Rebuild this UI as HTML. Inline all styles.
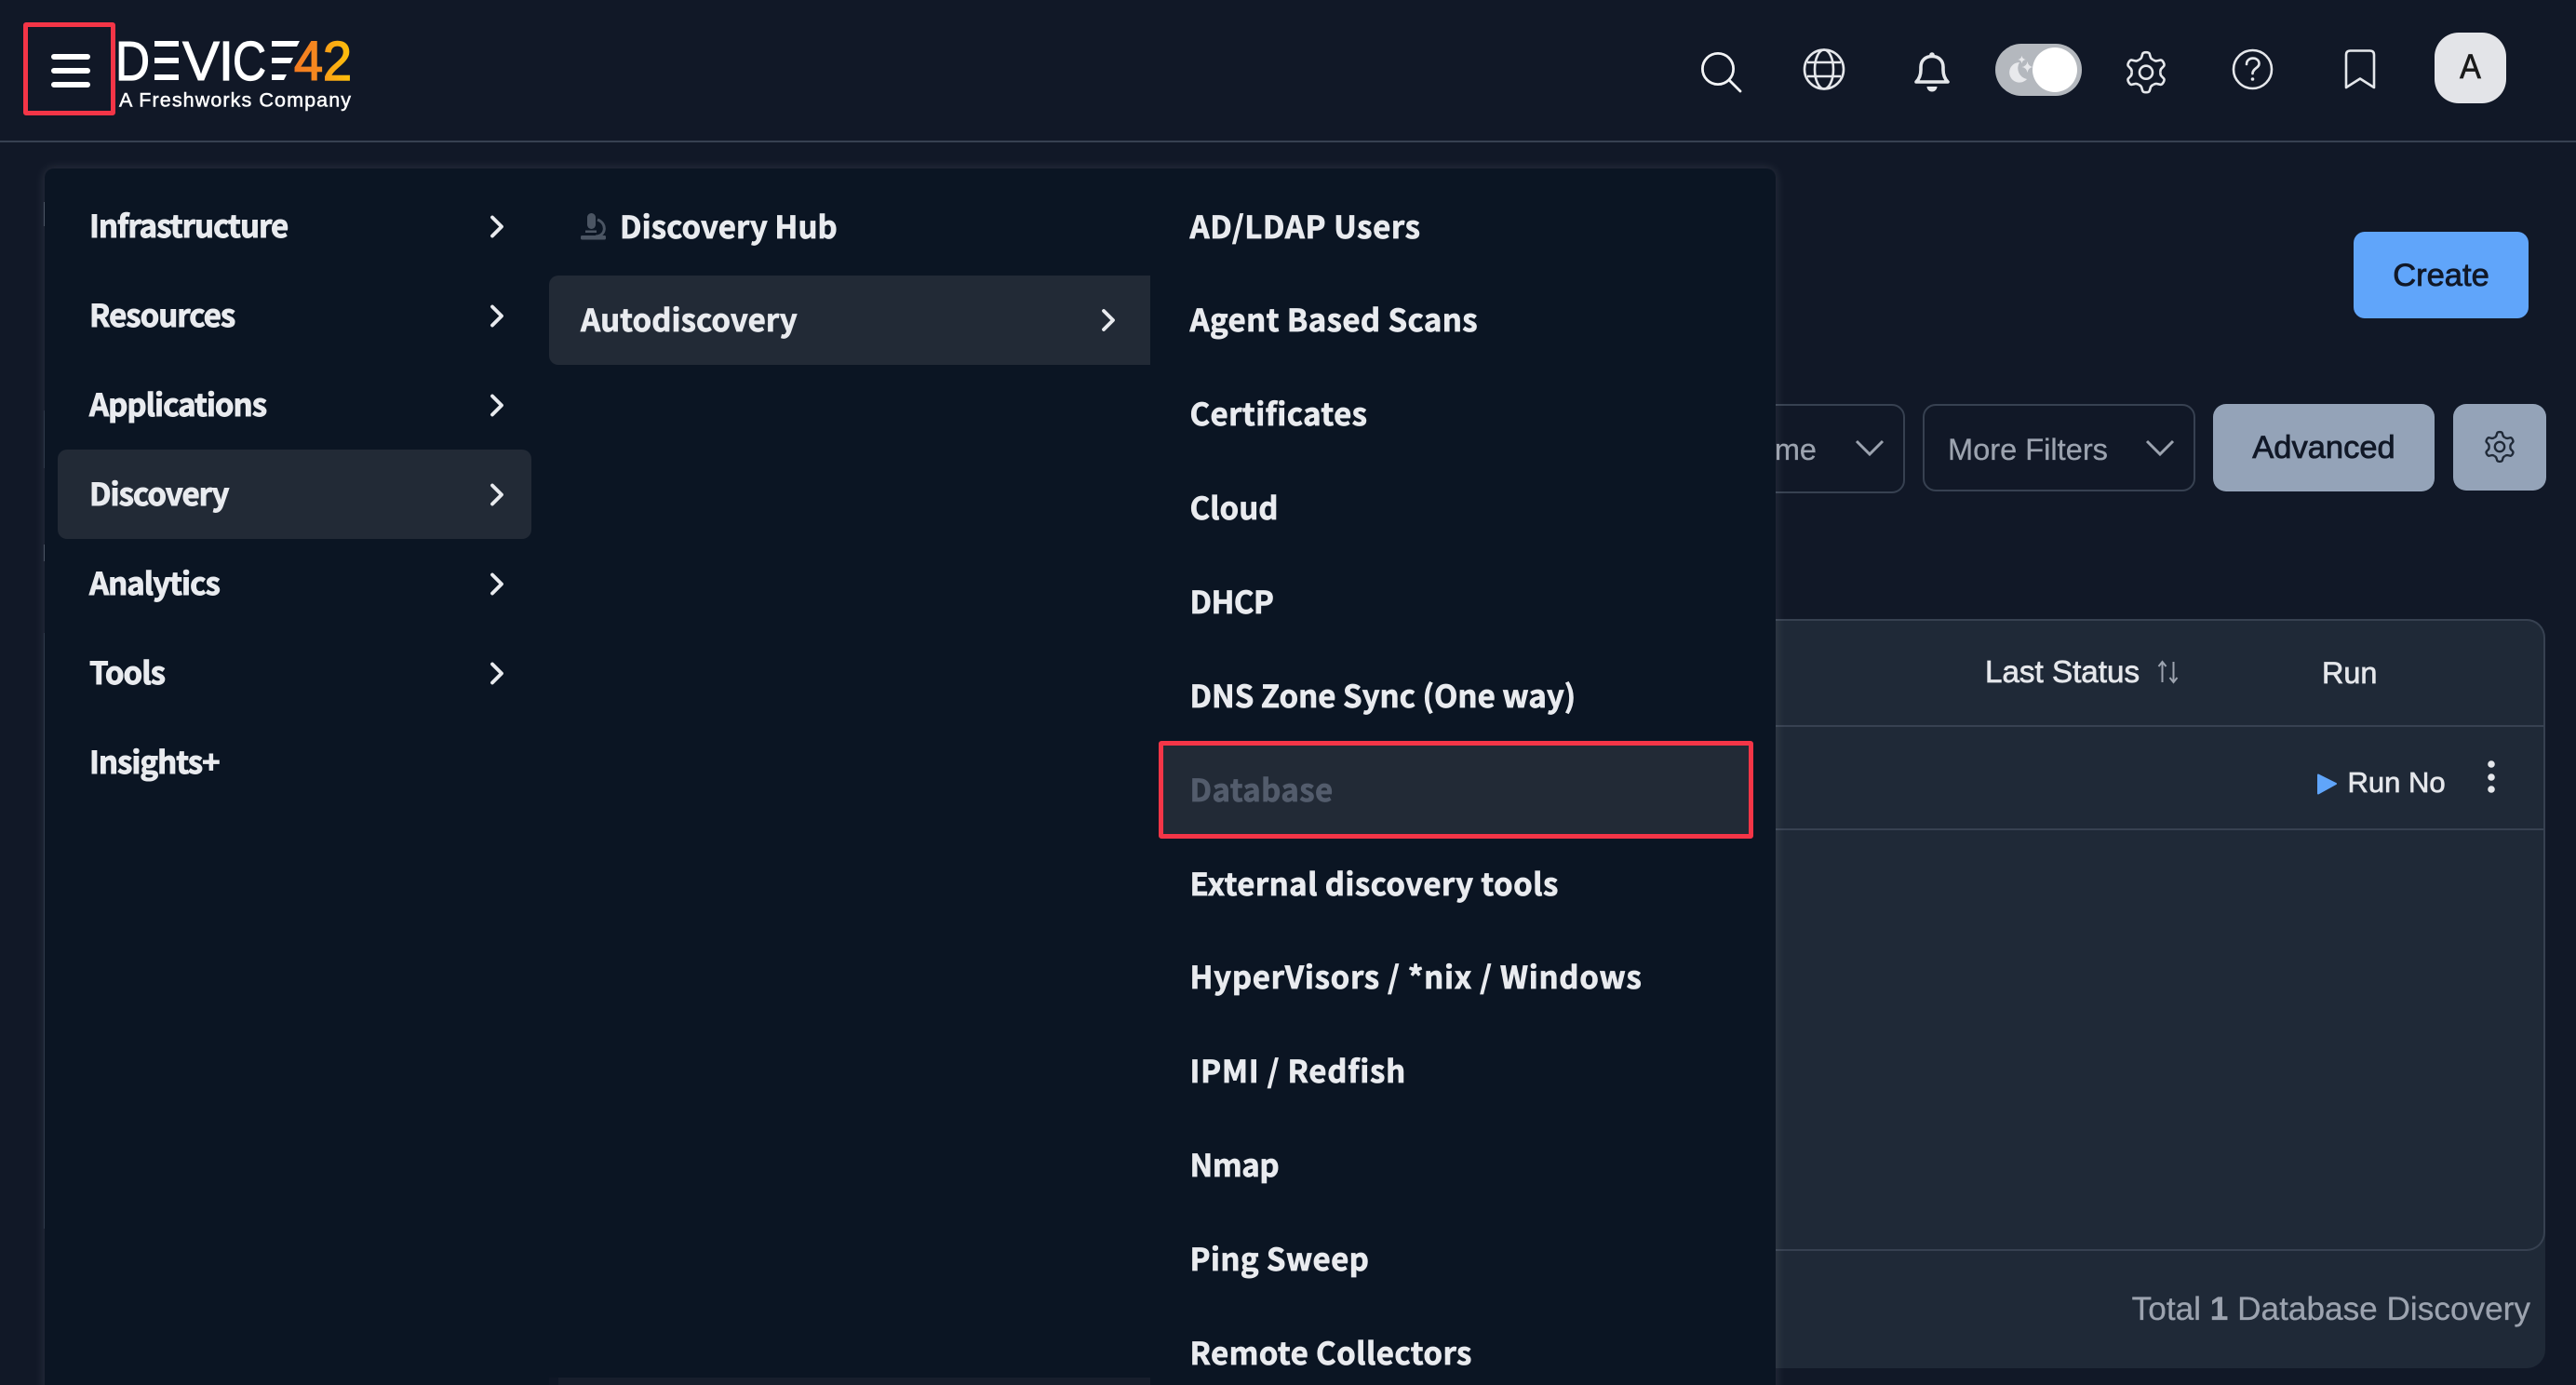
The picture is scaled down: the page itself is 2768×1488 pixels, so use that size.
<!DOCTYPE html>
<html lang="en">
<head>
<meta charset="utf-8">
<title>Device42</title>
<style>
html,body{margin:0;padding:0;width:2768px;height:1488px;overflow:hidden;background:#111827}
body{position:relative;font-family:"Liberation Sans",sans-serif}
.a{position:absolute}
.t{position:absolute;white-space:nowrap;line-height:40px;height:40px}
.u{color:#e5e7eb;-webkit-text-stroke:.7px currentColor}
.m{font-family:"Noto Sans CJK JP","Liberation Sans",sans-serif;font-weight:700;color:#e9ebef;font-size:33px;-webkit-text-stroke:.7px currentColor}
.c1{letter-spacing:-1px;left:96px;-webkit-text-stroke:.9px currentColor}
.c2{letter-spacing:.05px;left:624px}
.c3{letter-spacing:.4px;left:1278.5px}
</style>
</head>
<body>
<div class="a" style="left:0;top:151px;width:2768px;height:2px;background:#374151"></div>

<!-- page content -->
<div class="a" style="left:2529px;top:249px;width:188px;height:93px;border-radius:12px;background:#60a5fa"></div>
<div class="t" style="left:2529px;width:188px;top:276px;text-align:center;font-size:34.5px;color:#111827;-webkit-text-stroke:.8px #111827">Create</div>

<div class="a" style="left:1700px;top:434px;width:343px;height:92px;border:2px solid #374151;border-radius:14px"></div>
<div class="t" style="right:816px;top:463px;font-size:32.5px;color:#9ca3af;-webkit-text-stroke:.3px #9ca3af">Name</div>
<div class="a" style="left:2066px;top:434px;width:289px;height:90px;border:2px solid #374151;border-radius:14px"></div>
<div class="t" style="left:2093px;top:463px;font-size:32.6px;color:#9ca3af;-webkit-text-stroke:.3px #9ca3af">More Filters</div>
<div class="a" style="left:2378px;top:434px;width:238px;height:94px;border-radius:14px;background:#94a3b8"></div>
<div class="t" style="left:2378px;width:238px;top:461px;text-align:center;font-size:34.5px;color:#111827;-webkit-text-stroke:.8px #111827">Advanced</div>
<div class="a" style="left:2636px;top:434px;width:100px;height:93px;border-radius:14px;background:#94a3b8"></div>

<div class="a" style="left:1500px;top:665px;width:1235px;height:805px;background:#1f2937;border-radius:0 20px 20px 0"></div>
<div class="a" style="left:1500px;top:665px;width:1233px;height:675px;border:2px solid #374151;border-left:0;border-radius:0 20px 20px 0"></div>
<div class="a" style="left:1500px;top:779px;width:1235px;height:2px;background:#374151"></div>
<div class="a" style="left:1500px;top:890px;width:1235px;height:2px;background:#374151"></div>
<div class="t u" style="left:2133px;top:703px;font-size:33.2px">Last Status</div>
<div class="t u" style="left:2495px;top:703px;font-size:32.4px">Run</div>
<div class="t u" style="left:2522.5px;top:821px;font-size:31px">Run No</div>
<div class="t" style="right:49px;top:1387px;font-size:35.2px;color:#9ca3af;-webkit-text-stroke:.3px #9ca3af">Total <b>1</b> Database Discovery</div>

<!-- mega menu -->
<div class="a" style="left:48px;top:181px;width:1860px;height:1320px;background:#0b1523;border-radius:10px 10px 0 0;box-shadow:0 0 12px rgba(255,255,255,.13)"></div>
<div class="a" style="left:600px;top:1480px;width:636px;height:8px;background:#171e2c"></div>
<div class="a" style="left:590px;top:1480px;width:10px;height:8px;background:#0f1726"></div>
<div class="a" style="left:47px;top:217px;width:1px;height:26px;background:#4b5563"></div>
<div class="a" style="left:47px;top:441px;width:1px;height:62px;background:#2f3949"></div>
<div class="a" style="left:47px;top:585px;width:1px;height:18px;background:#4b5563"></div>
<div class="a" style="left:47px;top:680px;width:1px;height:640px;background:#2f3949"></div>

<div class="a" style="left:62px;top:483px;width:509px;height:96px;background:#222a36;border-radius:10px"></div>
<div class="a" style="left:590px;top:296px;width:646px;height:96px;background:#222a36;border-radius:10px 0 0 10px"></div>
<div class="a" style="left:1245px;top:796px;width:639px;height:105px;box-sizing:border-box;background:#222a36;border:5.5px solid #f43547;border-radius:3px"></div>

<div class="t m c1" style="top:220.5px">Infrastructure</div>
<div class="t m c1" style="top:316.5px">Resources</div>
<div class="t m c1" style="top:412.5px">Applications</div>
<div class="t m c1" style="top:508.5px">Discovery</div>
<div class="t m c1" style="top:604.5px">Analytics</div>
<div class="t m c1" style="top:700.5px">Tools</div>
<div class="t m c1" style="top:796.5px">Insights+</div>

<div class="t m c2" style="left:666px;top:221.5px">Discovery Hub</div>
<div class="t m c2" style="top:322px">Autodiscovery</div>

<div class="t m c3" style="top:221.5px;letter-spacing:.6px">AD/LDAP Users</div>
<div class="t m c3" style="top:322px">Agent Based Scans</div>
<div class="t m c3" style="top:423px">Certificates</div>
<div class="t m c3" style="top:523.5px;letter-spacing:0">Cloud</div>
<div class="t m c3" style="top:624.5px;letter-spacing:-.6px">DHCP</div>
<div class="t m c3" style="top:725.5px;letter-spacing:0">DNS Zone Sync (One way)</div>
<div class="t m c3" style="top:827px;color:#535c6c">Database</div>
<div class="t m c3" style="top:927.5px">External discovery tools</div>
<div class="t m c3" style="top:1027.5px;letter-spacing:.7px">HyperVisors / *nix / Windows</div>
<div class="t m c3" style="top:1129px;letter-spacing:.75px">IPMI / Redfish</div>
<div class="t m c3" style="top:1230px;letter-spacing:-.4px">Nmap</div>
<div class="t m c3" style="top:1331px">Ping Sweep</div>
<div class="t m c3" style="top:1432px">Remote Collectors</div>

<!-- header -->
<div class="a" style="left:25px;top:24px;width:99px;height:100px;box-sizing:border-box;border:5.5px solid #f43547;border-radius:3px"></div>
<div class="a" style="left:2616px;top:35px;width:77px;height:76px;border-radius:26px;background:#e3e4e8"></div>
<div class="t" style="left:2616px;width:77px;top:52px;text-align:center;font-size:37px;color:#1a1a1a;-webkit-text-stroke:.7px #1a1a1a;transform-origin:center;transform:scaleX(.92)">A</div>

<svg class="a" style="left:0;top:0" width="2768" height="1488" viewBox="0 0 2768 1488" fill="none">
  <defs>
    <linearGradient id="o" x1="0" y1="0" x2="1" y2="0"><stop offset="0" stop-color="#f47b20"/><stop offset=".45" stop-color="#f58a1f"/><stop offset=".6" stop-color="#fba515"/><stop offset="1" stop-color="#fcc10a"/></linearGradient>
    <path id="tooth" d="M-7.75-13.42Q-5-14.5-4.6-17L-3.7-20Q-3-21.5 0-21.5Q3-21.5 3.7-20L4.6-17Q5-14.5 7.75-13.42"/>
    <path id="star" d="M0-6Q.8-.8 6 0Q.8.8 0 6Q-.8.8-6 0Q-.8-.8 0-6Z"/>
  </defs>

  <!-- hamburger -->
  <g stroke="#fff" stroke-width="6" stroke-linecap="round">
    <path d="M58 61H94M58 76H94M58 91H94"/>
  </g>

  <!-- logo -->
  <g font-family="Liberation Sans, sans-serif" fill="#fff">
    <text x="124" y="86" font-size="59" textLength="37" lengthAdjust="spacingAndGlyphs" stroke="#fff" stroke-width="1.2">D</text>
    <rect x="166" y="44" width="26" height="6"/><rect x="166" y="62" width="26" height="6"/><rect x="166" y="80" width="26" height="6"/>
    <text x="196" y="86" font-size="59" textLength="40" lengthAdjust="spacingAndGlyphs" stroke="#fff" stroke-width="1">V</text>
    <text x="235" y="86" font-size="59" textLength="16" lengthAdjust="spacingAndGlyphs" stroke="#fff" stroke-width="1.2">I</text>
    <text x="250" y="86" font-size="59" textLength="36" lengthAdjust="spacingAndGlyphs" stroke="#fff" stroke-width="1.2">C</text>
    <path d="M292 44H322L319 50H292ZM292 62H315L312 68H292ZM292 80H308L305 86H292Z"/>
    <text x="316" y="86" font-size="59" textLength="62" lengthAdjust="spacingAndGlyphs" fill="url(#o)" stroke="url(#o)" stroke-width="1.6">42</text>
    <text x="128" y="114.500" font-size="21.5" textLength="249" stroke="#fff" stroke-width=".5">A Freshworks Company</text>
  </g>

  <!-- search -->
  <g stroke="#f3f4f6" stroke-width="2.8" stroke-linecap="round">
    <circle cx="1846" cy="74" r="16.6"/>
    <path d="M1858 86L1870 98"/>
  </g>
  <!-- globe -->
  <g stroke="#e5e7eb" stroke-width="2.6">
    <circle cx="1960" cy="74.5" r="21"/>
    <ellipse cx="1960" cy="74.5" rx="10" ry="21"/>
    <path d="M1942 67H1978M1942 82H1978"/>
  </g>
  <!-- bell -->
  <g transform="translate(2057 56)">
    <path d="M2 32Q7 27 7 19V16C7 9 12 4.5 19 4.5C26 4.5 31 9 31 16V19Q31 27 36 32Z" stroke="#e5e7eb" stroke-width="3.6" stroke-linejoin="round"/>
    <circle cx="19" cy="3" r="2.8" fill="#e5e7eb"/>
    <path d="M13.5 37H24.5A5.5 5.5 0 0 1 13.5 37Z" fill="#e5e7eb"/>
  </g>
  <!-- toggle -->
  <rect x="2144" y="47" width="93" height="56" rx="28" fill="#b4b8be"/>
  <circle cx="2208" cy="75" r="24" fill="#fff"/>
  <path d="M2170 67A10.8 10.8 0 1 0 2178 85A12 12 0 0 1 2170 67Z" fill="#e8e9ec"/>
  <use href="#star" transform="translate(2172.5 64) scale(.7)" fill="#e8e9ec"/>
  <use href="#star" transform="translate(2178.5 72)" fill="#e8e9ec"/>
  <!-- gear -->
  <g transform="translate(2306 77.7)" stroke="#e5e7eb" stroke-width="2.6" stroke-linejoin="round">
    <use href="#tooth"/><use href="#tooth" transform="rotate(60)"/><use href="#tooth" transform="rotate(120)"/><use href="#tooth" transform="rotate(180)"/><use href="#tooth" transform="rotate(240)"/><use href="#tooth" transform="rotate(300)"/>
    <circle r="7"/>
  </g>
  <!-- help -->
  <circle cx="2420.5" cy="74.5" r="20.5" stroke="#e5e7eb" stroke-width="2.6"/>
  <path d="M2414 69C2414 60.500 2427.500 60.500 2427.500 68.500C2427.500 73 2420.500 73.500 2420.500 79" stroke="#e5e7eb" stroke-width="2.6" stroke-linecap="round"/>
  <circle cx="2420.500" cy="85" r="1.800" fill="#e5e7eb"/>
  <!-- bookmark -->
  <path d="M2521 94V59Q2521 54.500 2525.500 54.500H2546.500Q2551 54.500 2551 59V94L2536 84.500Z" stroke="#e5e7eb" stroke-width="2.6" stroke-linejoin="round"/>

  <!-- filter chevrons -->
  <path d="M1995 474L2009 488L2023 474M2307 474L2321 488L2335 474" stroke="#9ca3af" stroke-width="3"/>
  <!-- toolbar gear -->
  <g transform="translate(2686 480) scale(.74)" stroke="#1f2937" stroke-width="3.200" stroke-linejoin="round">
    <use href="#tooth"/><use href="#tooth" transform="rotate(60)"/><use href="#tooth" transform="rotate(120)"/><use href="#tooth" transform="rotate(180)"/><use href="#tooth" transform="rotate(240)"/><use href="#tooth" transform="rotate(300)"/>
    <circle r="7"/>
  </g>

  <!-- sort arrows -->
  <path d="M2323.500 733V711M2319.500 716L2323.500 711L2327.500 716M2335.500 711V733M2331.500 728L2335.500 733L2339.500 728" stroke="#9ca3af" stroke-width="2"/>
  <!-- run arrow and dots -->
  <path d="M2491 832.500L2510 842L2491 852.500Z" fill="#60a5fa" stroke="#60a5fa" stroke-width="2" stroke-linejoin="round"/>
  <g fill="#e5e7eb"><circle cx="2677" cy="821" r="3.800"/><circle cx="2677" cy="835" r="3.800"/><circle cx="2677" cy="848" r="3.800"/></g>

  <!-- menu chevrons -->
  <g stroke="#e9ebef" stroke-width="3.800" stroke-linecap="round" stroke-linejoin="round">
    <path d="M529 233.500L539 243.500L529 253.500"/>
    <path d="M529 329.500L539 339.500L529 349.500"/>
    <path d="M529 425.500L539 435.500L529 445.500"/>
    <path d="M529 521.500L539 531.500L529 541.500"/>
    <path d="M529 617.500L539 627.500L529 637.500"/>
    <path d="M529 713.500L539 723.500L529 733.500"/>
    <path d="M1186 334L1196 344L1186 354"/>
  </g>

  <!-- microscope -->
  <g fill="#4b5563">
    <rect x="631" y="229" width="9" height="17" rx="4.500"/>
    <rect x="624" y="253" width="27" height="4.500" rx="1.500"/>
    <rect x="629" y="247.500" width="12" height="2.500"/>
  </g>
  <path d="M642 236C653 240 651 254 640 254" stroke="#4b5563" stroke-width="3"/>
</svg>
</body>
</html>
